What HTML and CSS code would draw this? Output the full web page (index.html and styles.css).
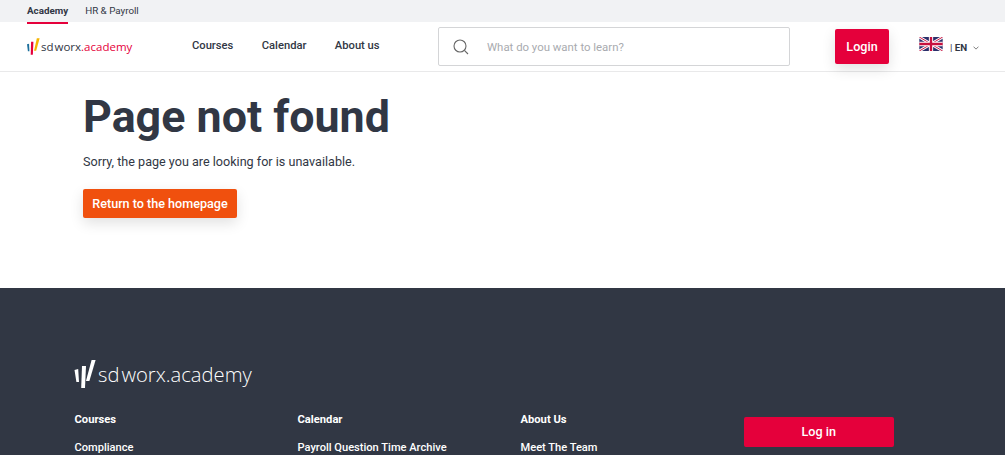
FILE: index.html
```html
<!DOCTYPE html>
<html lang="en">
<head>
<meta charset="utf-8">
<title>Page not found</title>
<link rel="stylesheet" href="styles.css">
</head>
<body>
<div class="topbar">
  <a class="tab tab-active">Academy</a>
  <a class="tab">HR &amp; Payroll</a>
</div>
<header class="header">
  <a class="logo">
    <svg class="logo-mark" viewBox="0 0 14 18" width="13" height="17">
      <path d="M0 6.5 L2.2 6 L2.6 14 L1 14 Z" fill="#1c6f9c"/>
      <path d="M4.4 4 L6.9 4 L6.3 18 L4 18 Z" fill="#e5003b"/>
      <path d="M10.6 0 L13.6 0 L9.9 13.5 L7.6 13.5 Z" fill="#f5b400"/>
    </svg>
    <span class="logo-sd">sd</span><span class="logo-worx">worx</span><span class="logo-academy">.academy</span>
  </a>
  <nav class="nav">
    <a>Courses</a>
    <a>Calendar</a>
    <a>About us</a>
  </nav>
  <div class="search">
    <svg class="search-icon" viewBox="0 0 16 16" width="16" height="16">
      <circle cx="7" cy="7" r="6" fill="none" stroke="#666" stroke-width="1.1"/>
      <path d="M11.4 11.4 L15 15" stroke="#666" stroke-width="1.1" fill="none"/>
    </svg>
    <span class="search-text">What do you want to learn?</span>
  </div>
  <a class="login">Login</a>
  <div class="lang">
    <svg class="flag" viewBox="0 0 60 36" width="24" height="14">
      <rect width="60" height="36" fill="#2b2f6b"/>
      <path d="M0 0 L60 36 M60 0 L0 36" stroke="#fff" stroke-width="7"/>
      <path d="M0 0 L60 36 M60 0 L0 36" stroke="#c8103e" stroke-width="2.5"/>
      <path d="M30 0 V36 M0 18 H60" stroke="#fff" stroke-width="11"/>
      <path d="M30 0 V36 M0 18 H60" stroke="#c8103e" stroke-width="6"/>
    </svg>
    <span class="lang-text"><span class="lang-sep">|</span> EN</span>
    <svg class="chev" viewBox="0 0 8 5" width="6" height="4"><path d="M0.7 0.7 L4 4 L7.3 0.7" fill="none" stroke="#666" stroke-width="1.1"/></svg>
  </div>
</header>
<main class="main">
  <h1 class="title">Page not found</h1>
  <p class="lead">Sorry, the page you are looking for is unavailable.</p>
  <a class="cta">Return to the homepage</a>
</main>
<footer class="footer">
  <a class="flogo">
    <svg class="flogo-mark" viewBox="0 0 22 28" width="22" height="28">
      <path d="M0.5 10 L4.2 9 L5 22 L2.4 22 Z" fill="#fff"/>
      <path d="M8 6 L12 6 L11 28 L7.2 28 Z" fill="#fff"/>
      <path d="M17.6 0 L21.6 0 L15.4 21 L12 21 Z" fill="#fff"/>
    </svg>
    <span class="flogo-sd">sd</span><span class="flogo-worx">worx</span><span>.academy</span>
  </a>
  <div class="fcols">
    <div class="fcol">
      <div class="fhead">Courses</div>
      <a class="flink">Compliance</a>
    </div>
    <div class="fcol">
      <div class="fhead">Calendar</div>
      <a class="flink">Payroll Question Time Archive</a>
    </div>
    <div class="fcol">
      <div class="fhead">About Us</div>
      <a class="flink">Meet The Team</a>
    </div>
    <div class="fcol">
      <a class="flogin">Log in</a>
    </div>
  </div>
</footer>
</body>
</html>
```
FILE: styles.css
```css
* { box-sizing: border-box; }
html, body { margin: 0; padding: 0; height: 455px; overflow: hidden; }
body { font-family: Roboto, "Liberation Sans", sans-serif; color: #313744; background: #fff; }

.topbar { height: 22px; background: #f1f2f4; display: flex; padding-left: 27px; gap: 17px; font-size: 9.8px; }
.tab { height: 24px; line-height: 21px; color: #313744; position: relative; z-index: 1; }
.tab-active { font-weight: 700; border-bottom: 2px solid #e5003b; }

.header { height: 50px; border-bottom: 1px solid #e9e9ea; display: flex; align-items: center; padding-left: 27px; background: #fff; }
.logo { display: flex; align-items: center; width: 165px; font-family: "Open Sans", sans-serif; font-size: 11.5px; line-height: 18px; color: #313744; }
.logo-mark { margin-right: 1px; }
.logo-sd { margin-right: 1px; }
.logo-academy { color: #e5003b; }
.nav { display: flex; gap: 28.4px; width: 246px; font-size: 11.2px; font-weight: 500; margin-top: -3px; }
.search { width: 352px; height: 39px; border: 1px solid #d4d5d7; border-radius: 2px; display: flex; align-items: center; padding-left: 14px; }
.search-icon { margin-right: 18px; }
.search-text { font-size: 11.4px; color: #a9abaf; }
.login { width: 54px; height: 35px; margin-left: 45px; margin-top: -1px; background: #e5003b; color: #fff; border-radius: 2px; font-size: 12.6px; font-weight: 500; line-height: 35px; text-align: center; box-shadow: 0 5px 14px rgba(0,0,0,.12); }
.lang { display: flex; align-items: center; margin-left: 30px; margin-top: -3px; }
.flag { margin-top: -3px; }
.lang-text { font-size: 9.8px; font-weight: 700; color: #313744; margin-left: 7px; margin-top: 5px; }
.lang-sep { font-weight: 400; }
.chev { margin-left: 6px; margin-top: 5px; }

.main { height: 216px; padding: 21px 0 0 83px; }
.title { margin: 0; font-size: 44.8px; line-height: 48px; font-weight: 700; color: #313744; }
.lead { margin: 11px 0 0; font-size: 12.6px; line-height: 20px; color: #313744; }
.cta { display: inline-block; margin-top: 17px; width: 154px; height: 29px; line-height: 29px; background: #f0500e; color: #fff; border-radius: 2px; font-size: 12.6px; font-weight: 500; text-align: center; box-shadow: 0 5px 14px rgba(0,0,0,.12); }

.footer { background: #313744; color: #fff; height: 167px; padding: 72px 0 0 74.5px; }
.flogo { display: flex; align-items: center; height: 28px; font-family: "Open Sans", sans-serif; font-size: 20.2px; font-weight: 300; color: #fff; }
.flogo-mark { margin-left: -0.5px; margin-right: 2px; }
.flogo-sd { margin-right: 2px; }
.fcols { display: grid; grid-template-columns: repeat(4, 223px); margin-top: 25px; }
.fhead { font-size: 11.2px; font-weight: 700; line-height: 14px; }
.flink { display: block; margin-top: 14px; font-size: 11.1px; font-weight: 500; line-height: 14px; }
.flogin { display: block; width: 150.5px; height: 30px; margin-top: 4px; line-height: 30px; background: #e5003b; color: #fff; border-radius: 2px; font-size: 12.6px; font-weight: 500; text-align: center; }
```
